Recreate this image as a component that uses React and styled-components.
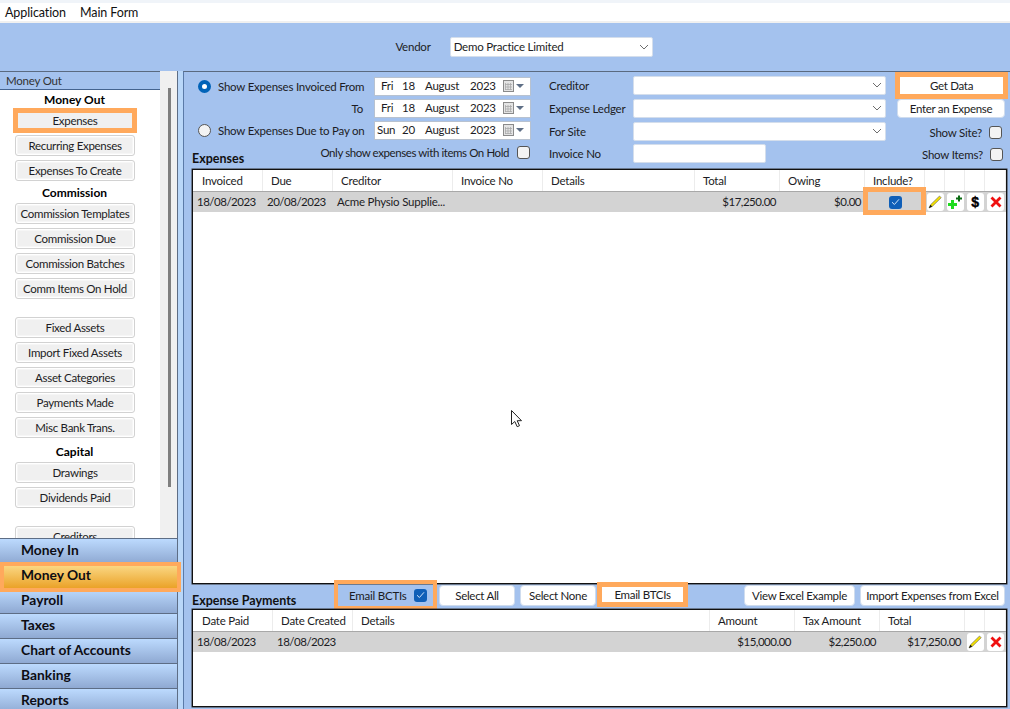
import React from 'react';
import styled, { createGlobalStyle, css } from 'styled-components';

const Global = createGlobalStyle`
  html, body { margin: 0; padding: 0; background: #a4c2ee; }
  * { box-sizing: border-box; }
  #root { width: 1010px; height: 709px; overflow: hidden; }
  body { font-family: Lato, "Liberation Sans", sans-serif; font-size: 11.5px; letter-spacing: -0.22px; color: #1c1c24; }
`;

const orange = '#ffa95c';
const Page = styled.div`width:1010px;height:709px;display:flex;flex-direction:column;position:relative;overflow:hidden;`;
const MenuBar = styled.div`height:23px;flex:none;background:#fff;border-top:3px solid #f0f4f9;border-bottom:2px solid #f0f0f0;display:flex;gap:14px;padding-left:5px;align-items:center;font-size:12.5px;letter-spacing:-0.1px;color:#111;`;
const VendorBar = styled.div`height:48px;flex:none;background:#a4c2ee;display:flex;align-items:center;justify-content:center;padding-left:38px;gap:19px;`;
const VendorLabel = styled.span`margin-bottom:2px;`;
const Body = styled.div`flex:1;display:flex;min-height:0;`;

const Sidebar = styled.div`width:178px;flex:none;display:flex;flex-direction:column;background:#f0f0f0;border-right:1px solid #5d6d85;`;
const SideTop = styled.div`flex:1;min-height:0;display:grid;grid-template-columns:160px 17px;`;
const SideLeft = styled.div`display:flex;flex-direction:column;min-height:0;background:#fff;`;
const SideHeader = styled.div`height:19px;flex:none;background:#a4c2ee;border-top:1px solid #5a6a80;border-bottom:1px solid #44638f;padding-left:6px;line-height:17px;color:#333;`;
const SideList = styled.div`flex:1;overflow:hidden;display:flex;flex-direction:column;align-items:center;padding:1px 10px 0 0;`;
const SideTitle = styled.div`height:17px;flex:none;line-height:17px;font-size:12px;letter-spacing:0;font-weight:700;color:#000;margin:${p => p.$gap || 0}px 1px 0 0;`;
const Spacer = styled.div`height:14px;flex:none;`;
const SideButton = styled.button`
  width:120px;height:21px;flex:none;margin:2px 0;padding:0;font:inherit;letter-spacing:-0.3px;color:#1c1c24;white-space:nowrap;
  background:#f0f0f0;border:1px solid #d2d2d2;border-radius:3px;box-shadow:inset 0 0 0 1px #fff, inset 0 0 0 2px #f6f6f6;
  ${p => p.$hot && css`width:114px;height:15px;margin:5px 0;border:none;border-radius:0;box-shadow:none;outline:5px solid ${orange};line-height:15px;`}
`;
const ScrollTrack = styled.div`padding:17px 0 0 8px;`;
const ScrollThumb = styled.div`width:2.5px;height:399px;background:#7f7f7f;`;
const Tabs = styled.div`flex:none;height:171px;display:flex;flex-direction:column;border-top:1px solid #5d6d85;`;
const Tab = styled.div`
  height:25px;flex:none;padding-left:21px;font-size:13.8px;letter-spacing:0;font-weight:700;line-height:22px;color:#0d0d14;position:relative;
  background:linear-gradient(#bcdafe,#8fa9d2);border-bottom:1px solid #5d6d85;
  ${p => p.$active && css`
    background:linear-gradient(#fbdb8a,#eaa024);z-index:2;border-bottom:none;
    &::after{content:'';position:absolute;left:0;right:-4px;top:-2px;bottom:-3px;border:4.5px solid ${orange};}
  `}
`;
const Gutter = styled.div`width:5px;flex:none;background:#b9d7f9;`;

const Main = styled.div`flex:1;min-width:0;display:flex;flex-direction:column;background:#a4c2ee;border-top:1px solid #5a6a80;border-left:1px solid #5a7aa8;`;
const Filters = styled.div`display:flex;height:97px;padding:4px 0 0 8px;flex:none;white-space:nowrap;`;
const ColDates = styled.div`width:339px;flex:none;display:flex;flex-direction:column;gap:3px;padding-top:1px;`;
const DateRow = styled.div`height:19px;flex:none;display:flex;align-items:center;justify-content:flex-end;`;
const RadioLabel = styled.label`flex:1;display:flex;align-items:center;gap:7px;padding-left:6px;`;
const Radio = styled.span`
  width:13px;height:13px;border-radius:50%;flex:none;
  ${p => p.$on ? css`background:#fff;border:4px solid #0063b8;` : css`background:#f3f3f3;border:1px solid #555;`}
`;
const RightLabel = styled.span`margin-right:11px;`;
const DatePicker = styled.div`
  width:157px;height:19px;background:#fff;border:1px solid #b8c2d0;display:grid;flex:none;padding-bottom:1px;
  grid-template-columns:${p => p.$wide ? '2px 25px 23px' : '6px 21px 23px'} 45px 33px 1fr;align-items:center;line-height:16px;
`;
const TitleRow = styled.div`height:23px;flex:none;display:flex;justify-content:space-between;`;
const Title = styled.span`font-weight:700;font-size:12.5px;letter-spacing:0;color:#111;align-self:flex-end;line-height:14px;`;
const OnHold = styled.label`display:flex;align-items:center;gap:8px;height:18px;padding-right:1px;letter-spacing:-0.42px;`;
const Combo = styled.div`
  width:${p => p.$w}px;height:${p => p.$h || 19}px;background:#fff;border:1px solid #d4deec;border-radius:2px;display:flex;align-items:center;
  justify-content:space-between;padding:0 3px 1px 3px;flex:none;
`;
const ColLedger = styled.div`width:337px;flex:none;margin-left:18px;display:flex;flex-direction:column;gap:4px;`;
const LedgerRow = styled.div`height:19px;flex:none;display:flex;align-items:center;margin-top:${p => p.$up ? -1 : 0}px;`;
const LedgerLabel = styled.span`width:84px;flex:none;`;
const ColActions = styled.div`width:113px;flex:none;margin-left:11px;display:flex;flex-direction:column;align-items:flex-end;padding-right:5px;`;
const Btn = styled.button`
  width:${p => p.$w}px;height:${p => p.$h || 21}px;flex:none;padding:0;font:inherit;letter-spacing:-0.3px;color:#1c1c24;background:#fff;border:1px solid #cfdcee;border-radius:4px;white-space:nowrap;
  margin:${p => p.$m || 0};
  ${p => p.$hot && css`border:none;border-radius:0;outline:5px solid ${orange};`}
`;
const CheckRow = styled.label`height:22px;flex:none;display:flex;align-items:center;gap:7px;justify-content:flex-end;margin-top:${p => p.$top || 0}px;padding-right:${p => p.$pad}px;`;
const Box = styled.span`
  width:13px;height:13px;flex:none;border-radius:3px;display:inline-flex;align-items:center;justify-content:center;
  ${p => p.$on ? css`background:#0f5fb8;` : css`background:#f3f3f3;border:1px solid #555;`}
`;

const DataGrid = styled.div`
  margin-left:8px;width:815px;background:#fff;border:1px solid #111;box-shadow:0 0 0 .5px #333;flex:${p => p.$grow ? 1 : 'none'};height:${p => p.$h ? `${p.$h}px` : 'auto'};min-height:0;
`;
const GridRow = styled.div`
  display:grid;grid-template-columns:${p => p.$cols};height:${p => p.$head ? 22 : 20}px;
  ${p => p.$head ? css`border-bottom:1px solid #a8a8a8;` : css`background:#d3d3d3;`}
`;
const HeadCell = styled.div`border-right:1px solid #ececec;padding:1px 0 0 8px;line-height:20px;white-space:nowrap;overflow:hidden;&:first-child{padding-left:9px;}`;
const Cell = styled.div`
  padding:0 ${p => p.$right ? 4 : 0}px 0 ${p => (p.$right || p.$center) ? 0 : 4}px;line-height:20px;letter-spacing:-0.5px;text-align:${p => p.$right ? 'right' : 'left'};white-space:nowrap;position:relative;
  display:${p => p.$center ? 'flex' : 'block'};align-items:center;justify-content:center;
`;
const TextCell = styled(Cell)`letter-spacing:-0.22px;`;
const CellHighlight = styled.span`position:absolute;left:-2px;right:-1px;top:-5px;bottom:-3px;border:5px solid ${orange};pointer-events:none;`;
const IconBtn = styled.span`width:17px;height:18px;background:#fff;border-radius:3px;display:flex;align-items:center;justify-content:center;`;
const DollarSign = styled.span`font-family:"Liberation Sans",sans-serif;font-weight:700;font-size:14px;color:#000;line-height:18px;-webkit-text-stroke:.4px #000;`;
const BottomBar = styled.div`height:25px;flex:none;display:flex;align-items:flex-start;padding-left:8px;white-space:nowrap;`;
const BottomTitle = styled(Title)`width:142px;margin-top:10px;flex:none;align-self:flex-start;`;
const EmailToggle = styled.label`
  width:95px;height:22px;flex:none;outline:4.5px solid ${orange};display:flex;align-items:center;margin:0 6px 0 4px;padding:0 6px 0 11px;justify-content:space-between;
`;
const BottomGroup = styled.div`display:flex;gap:5px;padding-top:1px;margin-left:${p => p.$auto ? 'auto' : '0'};margin-right:${p => p.$auto ? '5px' : '0'};`;
const HotWrap = styled.div`margin:3px 0 0 6px;`;
const Foot = styled.div`height:2px;flex:none;`;
const Pointer = styled.svg`position:absolute;left:510px;top:409px;`;

const Chevron = () => <svg width="10" height="6" viewBox="0 0 10 6"><path d="M1 1l4 4 4-4" fill="none" stroke="#6d6d6d" strokeWidth="1"/></svg>;
const Calendar = () => (
  <svg width="21" height="12" viewBox="0 0 21 12">
    <rect x=".5" y=".5" width="10" height="11" fill="#e4e4e4" stroke="#8a8a8a"/>
    <path d="M2.5 3v7M5 3v7M7.5 3v7M2 4.5h7M2 7h7M2 9.5h7" stroke="#a9a9a9" strokeWidth=".8"/>
    <path d="M13 4h8l-4 4z" fill="#5f6f86"/>
  </svg>
);
const Tick = () => <svg width="9" height="8" viewBox="0 0 9 8"><path d="M1 4.2l2.4 2.3L8 1.3" fill="none" stroke="#cfe4fb" strokeWidth="1"/></svg>;
const Pencil = () => <svg width="14" height="14" viewBox="0 0 14 14"><path d="M1 13l1.5-3.2L11.5 1l1.7 1.7-9 8.8z" fill="#f5e200" stroke="#444" strokeWidth=".5"/><path d="M1 13l1.5-3.2 1.7 1.7z" fill="#111"/></svg>;
const Plus = () => <svg width="16" height="15" viewBox="0 0 16 15"><path d="M4 5h3v3h3v3H7v3H4v-3H1V8h3z" fill="#1fdc1f"/><path d="M11 0.5h2v2h2v2h-2v2h-2v-2H9v-2h2z" fill="#0a6b12"/></svg>;
const Cross = () => <svg width="12" height="12" viewBox="0 0 12 12"><path d="M1.5 1.5l9 9M10.5 1.5l-9 9" stroke="#ef1010" strokeWidth="2.8"/></svg>;

const DateField = ({ day, num, wide }) => (
  <DatePicker $wide={wide}><span /><span>{day}</span><span>{num}</span><span>August</span><span>2023</span><Calendar /></DatePicker>
);

const expCols = '70px 70px 120px 90px 152px 85px 85px 60px 20px 20px 20px 1fr';
const payCols = '80px 80px 357px 85px 85px 85px 20px 1fr';

export default function App() {
  return (
    <Page>
      <Global />
      <MenuBar><span>Application</span><span>Main Form</span></MenuBar>
      <VendorBar>
        <VendorLabel>Vendor</VendorLabel>
        <Combo $w={203} $h={20}><span>Demo Practice Limited</span><Chevron /></Combo>
      </VendorBar>
      <Body>
        <Sidebar>
          <SideTop>
            <SideLeft>
              <SideHeader>Money Out</SideHeader>
              <SideList>
                <SideTitle>Money Out</SideTitle>
                <SideButton $hot>Expenses</SideButton>
                <SideButton>Recurring Expenses</SideButton>
                <SideButton>Expenses To Create</SideButton>
                <SideTitle $gap={1}>Commission</SideTitle>
                <SideButton>Commission Templates</SideButton>
                <SideButton>Commission Due</SideButton>
                <SideButton>Commission Batches</SideButton>
                <SideButton>Comm Items On Hold</SideButton>
                <Spacer />
                <SideButton>Fixed Assets</SideButton>
                <SideButton>Import Fixed Assets</SideButton>
                <SideButton>Asset Categories</SideButton>
                <SideButton>Payments Made</SideButton>
                <SideButton>Misc Bank Trans.</SideButton>
                <SideTitle $gap={3}>Capital</SideTitle>
                <SideButton>Drawings</SideButton>
                <SideButton>Dividends Paid</SideButton>
                <Spacer />
                <SideButton>Creditors</SideButton>
              </SideList>
            </SideLeft>
            <ScrollTrack><ScrollThumb /></ScrollTrack>
          </SideTop>
          <Tabs>
            <Tab>Money In</Tab>
            <Tab $active>Money Out</Tab>
            <Tab>Payroll</Tab>
            <Tab>Taxes</Tab>
            <Tab>Chart of Accounts</Tab>
            <Tab>Banking</Tab>
            <Tab>Reports</Tab>
          </Tabs>
        </Sidebar>
        <Gutter />
        <Main>
          <Filters>
            <ColDates>
              <DateRow><RadioLabel><Radio $on />Show Expenses Invoiced From</RadioLabel><DateField day="Fri" num="18" /></DateRow>
              <DateRow><RightLabel>To</RightLabel><DateField day="Fri" num="18" /></DateRow>
              <DateRow><RadioLabel><Radio />Show Expenses Due to Pay on</RadioLabel><DateField day="Sun" num="20" wide /></DateRow>
              <TitleRow>
                <Title>Expenses</Title>
                <OnHold><span>Only show expenses with items On Hold</span><Box /></OnHold>
              </TitleRow>
            </ColDates>
            <ColLedger>
              <LedgerRow><LedgerLabel>Creditor</LedgerLabel><Combo $w={253}><span /><Chevron /></Combo></LedgerRow>
              <LedgerRow><LedgerLabel>Expense Ledger</LedgerLabel><Combo $w={253}><span /><Chevron /></Combo></LedgerRow>
              <LedgerRow><LedgerLabel>For Site</LedgerLabel><Combo $w={253}><span /><Chevron /></Combo></LedgerRow>
              <LedgerRow $up><LedgerLabel>Invoice No</LedgerLabel><Combo $w={133}><span /></Combo></LedgerRow>
            </ColLedger>
            <ColActions>
              <Btn $hot $w={103} $h={17} $m="1px 2px 0 0">Get Data</Btn>
              <Btn $w={108} $h={19} $m="5px 0 0">Enter an Expense</Btn>
              <CheckRow $top={3} $pad={3}>Show Site?<Box /></CheckRow>
              <CheckRow $pad={2}>Show Items?<Box /></CheckRow>
            </ColActions>
          </Filters>
          <DataGrid $grow>
            <GridRow $head $cols={expCols}>
              <HeadCell>Invoiced</HeadCell><HeadCell>Due</HeadCell><HeadCell>Creditor</HeadCell><HeadCell>Invoice No</HeadCell><HeadCell>Details</HeadCell><HeadCell>Total</HeadCell><HeadCell>Owing</HeadCell><HeadCell>Include?</HeadCell><HeadCell /><HeadCell /><HeadCell /><HeadCell />
            </GridRow>
            <GridRow $cols={expCols}>
              <Cell>18/08/2023</Cell><Cell>20/08/2023</Cell><TextCell>Acme Physio Supplie...</TextCell><Cell /><Cell />
              <Cell $right>$17,250.00</Cell><Cell $right>$0.00</Cell>
              <Cell $center><Box $on><Tick /></Box><CellHighlight /></Cell>
              <Cell $center><IconBtn><Pencil /></IconBtn></Cell>
              <Cell $center><IconBtn><Plus /></IconBtn></Cell>
              <Cell $center><IconBtn><DollarSign>$</DollarSign></IconBtn></Cell>
              <Cell $center><IconBtn><Cross /></IconBtn></Cell>
            </GridRow>
          </DataGrid>
          <BottomBar>
            <BottomTitle>Expense Payments</BottomTitle>
            <EmailToggle>Email BCTIs<Box $on><Tick /></Box></EmailToggle>
            <BottomGroup>
              <Btn $w={76}>Select All</Btn>
              <Btn $w={76}>Select None</Btn>
            </BottomGroup>
            <HotWrap><Btn $hot $w={81} $h={15}>Email BTCIs</Btn></HotWrap>
            <BottomGroup $auto>
              <Btn $w={111}>View Excel Example</Btn>
              <Btn $w={145}>Import Expenses from Excel</Btn>
            </BottomGroup>
          </BottomBar>
          <DataGrid $h={98}>
            <GridRow $head $cols={payCols}>
              <HeadCell>Date Paid</HeadCell><HeadCell>Date Created</HeadCell><HeadCell>Details</HeadCell><HeadCell>Amount</HeadCell><HeadCell>Tax Amount</HeadCell><HeadCell>Total</HeadCell><HeadCell /><HeadCell />
            </GridRow>
            <GridRow $cols={payCols}>
              <Cell>18/08/2023</Cell><Cell>18/08/2023</Cell><Cell />
              <Cell $right>$15,000.00</Cell><Cell $right>$2,250.00</Cell><Cell $right>$17,250.00</Cell>
              <Cell $center><IconBtn><Pencil /></IconBtn></Cell>
              <Cell $center><IconBtn><Cross /></IconBtn></Cell>
            </GridRow>
          </DataGrid>
          <Foot />
        </Main>
      </Body>
      <Pointer width="14" height="20" viewBox="0 0 14 20"><path d="M1.5 1.5v14l3.3-3 2.4 5.2 2.3-1-2.3-5h4.3z" fill="#fff" stroke="#222" strokeWidth="1"/></Pointer>
    </Page>
  );
}
